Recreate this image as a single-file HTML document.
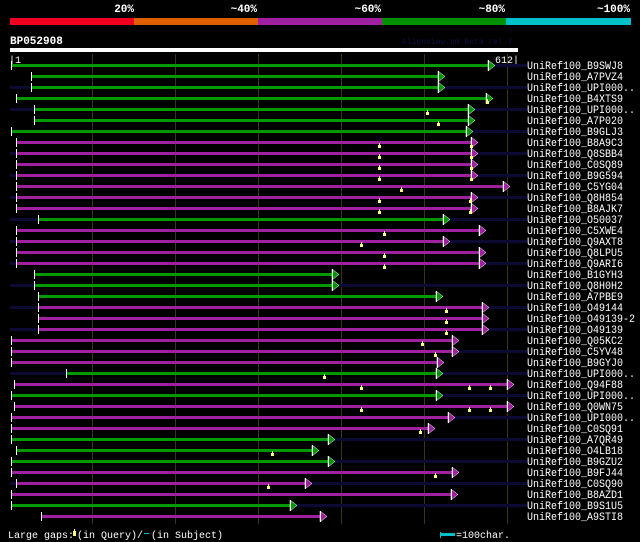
<!DOCTYPE html>
<html><head><meta charset="utf-8"><style>
html,body{margin:0;padding:0;background:#000;width:640px;height:542px;overflow:hidden}
svg{display:block}
text{font-family:"Liberation Mono","DejaVu Sans Mono",monospace}
</style></head><body>
<svg id="s" width="640" height="542" xmlns="http://www.w3.org/2000/svg">
<rect width="640" height="542" fill="#000"/>
<g font-size="11" font-weight="bold" fill="#fff" text-anchor="end">
<text x="134" y="12">20%</text><text x="257" y="12">~40%</text><text x="381" y="12">~60%</text><text x="505" y="12">~80%</text><text x="630" y="12">~100%</text>
</g>
<rect x="10" y="18" width="124" height="7" fill="#f0001e"/>
<rect x="134" y="18" width="124" height="7" fill="#e06000"/>
<rect x="258" y="18" width="124" height="7" fill="#a020a0"/>
<rect x="382" y="18" width="124" height="7" fill="#009000"/>
<rect x="506" y="18" width="125" height="7" fill="#00c0c8"/>
<text x="10" y="44" font-size="11" font-weight="bold" fill="#fff">BP052908</text>
<text x="402" y="44" font-size="8" fill="#101040">AlignView.pm Beta rel.7</text>
<rect x="10" y="48" width="508" height="4" fill="#fff"/>
<text x="9" y="63" font-size="10" fill="#fff">|1</text>
<text x="519" y="63" font-size="10" fill="#fff" text-anchor="end">612|</text>
<g stroke="#3a3410" stroke-width="1">
<line x1="92.5" y1="54" x2="92.5" y2="524"/><line x1="175.5" y1="54" x2="175.5" y2="524"/><line x1="258.5" y1="54" x2="258.5" y2="524"/><line x1="341.5" y1="54" x2="341.5" y2="524"/><line x1="424.5" y1="54" x2="424.5" y2="524"/><line x1="507.5" y1="54" x2="507.5" y2="524"/>
</g>
<g id="rows"></g>
<text x="8" y="538" font-size="10" fill="#fff">Large gaps:</text>
<rect x="73" y="531" width="3" height="5" fill="#ffff80"/><rect x="74" y="529" width="1" height="2" fill="#ffff80"/>
<text x="77" y="538" font-size="10" fill="#fff">(in Query)/</text>
<rect x="144" y="533" width="5" height="1" fill="#00c0c8"/>
<text x="151" y="538" font-size="10" fill="#fff">(in Subject)</text>
<rect x="440" y="532" width="1" height="6" fill="#00c0c8"/><rect x="440" y="533" width="15" height="3" fill="#00c0c8"/>
<text x="456" y="538" font-size="10" fill="#fff">=100char.</text>
</svg>
<script>
var R=[
["B9SWJ8",11,494,"g",0,1,[]],
["A7PVZ4",31,444,"g",0,0,[]],
["UPI000..",31,444,"g",1,1,[]],
["B4XTS9",16,492,"g",0,0,[487]],
["UPI000..",34,474,"g",1,1,[427]],
["A7P020",34,474,"g",0,0,[438]],
["B9GLJ3",11,472,"g",0,1,[]],
["B8A9C3",16,477,"m",0,0,[379,471]],
["Q8SBB4",16,477,"m",1,1,[379,471]],
["C0SQ89",16,477,"m",0,0,[379,471]],
["B9G594",16,477,"m",1,1,[379,471]],
["C5YG04",16,509,"m",0,0,[401]],
["Q8H854",16,477,"m",1,1,[379,470]],
["B8AJK7",16,477,"m",0,0,[379,470]],
["O50037",38,449,"g",1,1,[]],
["C5XWE4",16,485,"m",0,0,[384]],
["Q9AXT8",16,449,"m",1,1,[361]],
["Q8LPU5",16,485,"m",0,0,[384]],
["Q9ARI6",16,485,"m",1,1,[384]],
["B1GYH3",34,338,"g",0,0,[]],
["Q8H0H2",34,338,"g",1,1,[]],
["A7PBE9",38,442,"g",0,0,[]],
["O49144",38,488,"m",1,1,[446]],
["O49139-2",38,488,"m",0,0,[446]],
["O49139",38,488,"m",1,1,[446]],
["Q05KC2",11,458,"m",0,0,[422]],
["C5YV48",11,458,"m",0,1,[435]],
["B9GYJ0",11,443,"m",0,0,[]],
["UPI000..",66,442,"g",1,1,[324]],
["Q94F88",14,513,"m",0,0,[361,469,490]],
["UPI000..",11,442,"g",0,1,[]],
["Q0WN75",14,513,"m",0,0,[361,469,490]],
["UPI000..",11,454,"m",0,1,[]],
["C0SQ91",11,434,"m",0,0,[420]],
["A7QR49",11,334,"g",0,1,[]],
["O4LB18",16,318,"g",0,0,[272]],
["B9GZU2",11,334,"g",0,1,[]],
["B9FJ44",11,458,"m",0,0,[435]],
["C0SQ90",16,311,"m",1,1,[268]],
["B8AZD1",11,457,"m",0,0,[]],
["B9S1U5",11,296,"g",0,1,[]],
["A9STI8",41,326,"m",0,0,[]]
];
var NS="http://www.w3.org/2000/svg",G=document.getElementById("rows");
function el(n,a,txt){var e=document.createElementNS(NS,n);for(var k in a)e.setAttribute(k,a[k]);if(txt)e.textContent=txt;G.appendChild(e);return e;}
R.forEach(function(r,i){
 var y=65+i*11,c=r[3]=="g"?"#009900":"#a020a0";
 if(r[4])el("rect",{x:10,y:y-1,width:r[1]-10,height:3,fill:"#0a0a32"});
 if(r[5])el("rect",{x:r[2],y:y-1,width:527-r[2],height:3,fill:"#0a0a32"});
 var t=r[2]-6;
 el("rect",{x:r[1],y:y-1,width:t-r[1],height:3,fill:c});
 el("rect",{x:r[1],y:y-4,width:1,height:9,fill:"#fff"});
 el("path",{d:"M"+t+" "+(y-5)+"L"+(r[2]+1)+" "+(y+0.5)+"L"+t+" "+(y+6)+"Z",fill:c,stroke:"#fff","stroke-width":0.5});
 el("rect",{x:t,y:y-5,width:1,height:11,fill:"#fff"});
 r[6].forEach(function(m){el("rect",{x:m-1,y:y+3,width:3,height:3,fill:"#ffff80"});el("rect",{x:m,y:y+1,width:1,height:2,fill:"#ffff80"});});
 el("text",{x:0,y:0,"font-size":11,fill:"#fff",transform:"translate(527,"+(y+4)+") scale(0.91,1)"},"UniRef100_"+r[0]);
});
</script>
</body></html>
